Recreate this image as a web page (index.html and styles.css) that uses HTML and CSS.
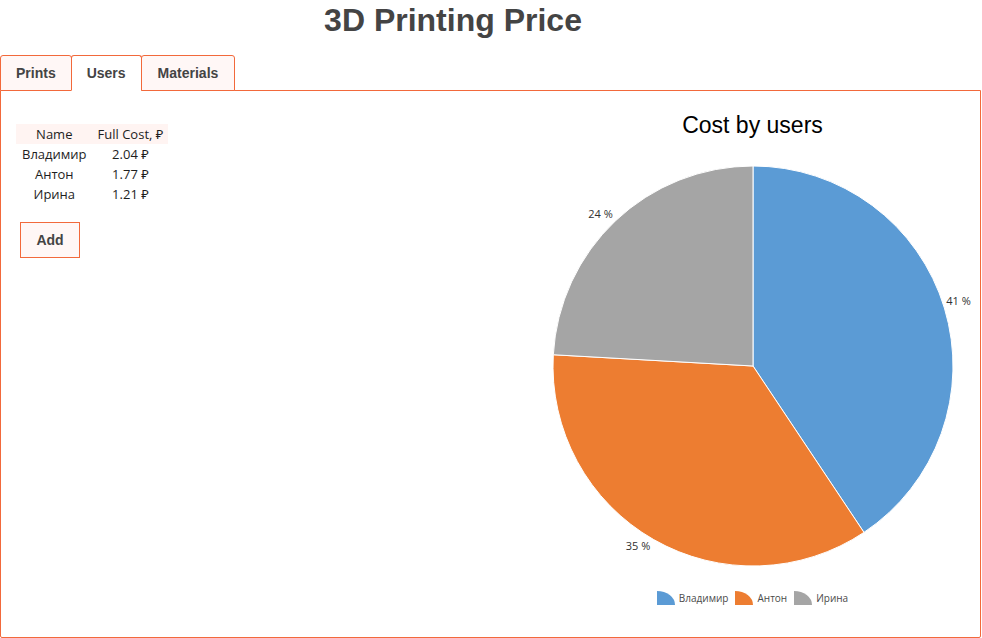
FILE: index.html
```html
<!DOCTYPE html>
<html lang="en">
<head>
<meta charset="utf-8">
<title>3D Printing Price</title>
<link rel="stylesheet" href="styles.css">
</head>
<body>
<header class="page-head">
  <h1 class="page-title">3D Printing Price</h1>
</header>
<nav class="tabs">
  <button class="tab">Prints</button>
  <button class="tab tab-active">Users</button>
  <button class="tab tab-wide">Materials</button>
</nav>
<section class="panel">
  <div class="users">
    <table class="cost-table">
      <thead>
        <tr><th>Name</th><th>Full Cost, ₽</th></tr>
      </thead>
      <tbody>
        <tr><td>Владимир</td><td>2.04 ₽</td></tr>
        <tr><td>Антон</td><td>1.77 ₽</td></tr>
        <tr><td>Ирина</td><td>1.21 ₽</td></tr>
      </tbody>
    </table>
    <button class="add-btn">Add</button>
  </div>
  <div class="chart">
    <h2 class="chart-title">Cost by users</h2>
    <svg class="pie" width="454" height="440" viewBox="0 0 454 440">
      <path class="slice-blue" d="M227,220 L227,20 A200,200 0 0 1 337.98,386.38 Z"/>
      <path class="slice-orange" d="M227,220 L337.98,386.38 A200,200 0 0 1 27.32,208.74 Z"/>
      <path class="slice-gray" d="M227,220 L27.32,208.74 A200,200 0 0 1 227,20 Z"/>
      <text class="pie-label" x="432.5" y="159">41 %</text>
      <text class="pie-label" x="112" y="404">35 %</text>
      <text class="pie-label" x="74.5" y="72">24 %</text>
    </svg>
    <ul class="legend">
      <li class="legend-item"><svg class="legend-icon" width="18" height="14" viewBox="0 0 18 14"><path class="slice-blue" d="M0,14 L0,0 A18,14 0 0 1 18,14 Z"/></svg>Владимир</li>
      <li class="legend-item"><svg class="legend-icon" width="18" height="14" viewBox="0 0 18 14"><path class="slice-orange" d="M0,14 L0,0 A18,14 0 0 1 18,14 Z"/></svg>Антон</li>
      <li class="legend-item"><svg class="legend-icon" width="18" height="14" viewBox="0 0 18 14"><path class="slice-gray" d="M0,14 L0,0 A18,14 0 0 1 18,14 Z"/></svg>Ирина</li>
    </ul>
  </div>
</section>
</body>
</html>
```

FILE: styles.css
```css
html, body {
  margin: 0;
  padding: 0;
  background: #ffffff;
}

body {
  font-family: "Liberation Sans", Arial, sans-serif;
  color: #444444;
  width: 982px;
}

.page-head {
  padding: 2px 76px 0 0;
  margin-bottom: 16px;
}

.page-title {
  margin: 0;
  font-size: 32px;
  line-height: 37px;
  font-weight: bold;
  text-align: center;
  color: #444444;
}

.tabs {
  display: flex;
  height: 36px;
  margin-bottom: -1px;
  position: relative;
  z-index: 1;
}

.tab {
  font-family: "Liberation Sans", Arial, sans-serif;
  font-size: 14px;
  font-weight: bold;
  color: #444444;
  background: #fff7f6;
  border: 1px solid #f2693b;
  border-radius: 3px 3px 0 0;
  padding: 0 15px;
  margin: 0 -1px 0 0;
  height: 36px;
  line-height: 34px;
  cursor: pointer;
}

.tab-wide {
  padding: 0 16px;
}

.tab-active {
  background: #ffffff;
  border-bottom-color: #ffffff;
}

.panel {
  display: flex;
  width: 981px;
  height: 548px;
  box-sizing: border-box;
  border: 1px solid #f2693b;
  border-radius: 0 0 2px 2px;
}

.users {
  width: 521px;
  padding: 33px 0 0 15px;
  box-sizing: border-box;
}

.cost-table {
  border-collapse: collapse;
  font-family: "Open Sans", "Noto Sans", sans-serif;
  font-size: 13px;
  color: #1e1e1e;
}

.cost-table th {
  font-weight: normal;
  background: #fff4f2;
}

.cost-table th,
.cost-table td {
  height: 20px;
  padding: 0 5px 0 6px;
  text-align: center;
  white-space: nowrap;
}

.add-btn {
  display: block;
  margin: 18px 0 0 4px;
  width: 60px;
  height: 36px;
  padding: 0;
  font-family: "Liberation Sans", Arial, sans-serif;
  font-size: 14px;
  font-weight: bold;
  color: #444444;
  background: #fff7f6;
  border: 1px solid #f2693b;
  cursor: pointer;
}

.chart {
  flex: 1;
  padding: 20px 0 0 3px;
  display: flex;
  flex-direction: column;
  align-items: center;
}

.chart-title {
  margin: 0;
  font-family: "Liberation Sans", Arial, sans-serif;
  font-size: 23px;
  line-height: 28px;
  font-weight: normal;
  color: #000000;
}

.pie {
  display: block;
  margin-top: 7px;
}

.slice-blue { fill: #5b9bd5; }
.slice-orange { fill: #ed7d31; }
.slice-gray { fill: #a5a5a5; }

.pie path {
  stroke: #ffffff;
  stroke-width: 1;
}

.pie-label {
  font-family: "Open Sans", "Noto Sans", sans-serif;
  font-size: 11px;
  fill: #303030;
  text-anchor: middle;
}

.legend {
  list-style: none;
  margin: 4px 0 0;
  padding: 0;
  display: flex;
  gap: 7px;
  font-family: "Open Sans", "Noto Sans", sans-serif;
  font-size: 10px;
  line-height: 16px;
  color: #4a4a4a;
}

.legend-item {
  display: flex;
  align-items: center;
  gap: 4px;
}

.legend-icon {
  display: block;
}
```
